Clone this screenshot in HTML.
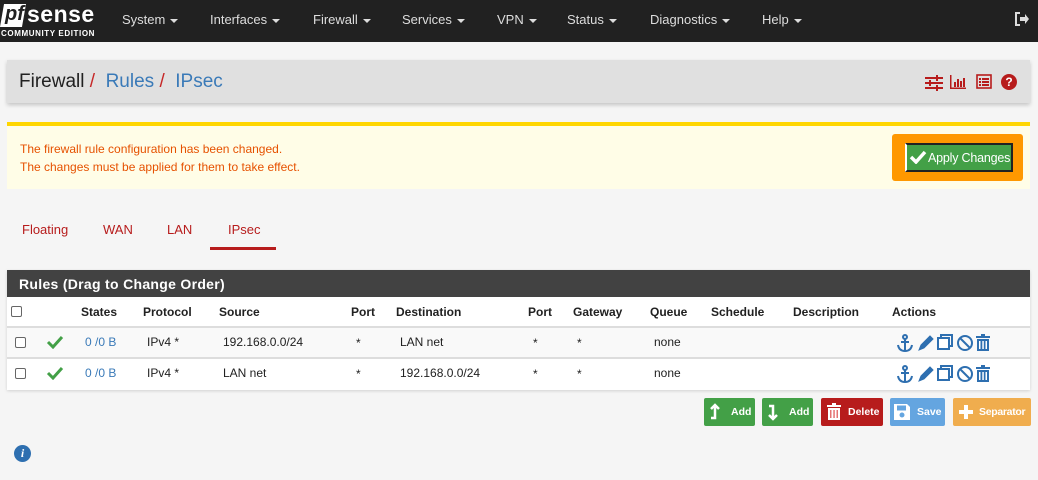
<!DOCTYPE html>
<html><head><meta charset="utf-8"><style>
*{box-sizing:border-box}
body{margin:0;width:1038px;height:480px;background:#f5f5f5;font-family:"Liberation Sans",sans-serif;font-size:12px;color:#212121;position:relative;overflow:hidden}
.nav{position:absolute;left:0;top:0;width:1038px;height:42px;background:#212121}
.nav .m{position:absolute;top:12px;color:#ddd;font-size:13px}
.car{display:inline-block;border-left:4px solid transparent;border-right:4px solid transparent;border-top:4px solid #ddd;vertical-align:middle;margin-left:5px}
.crumb{position:absolute;left:7px;top:60px;width:1023px;height:43px;background:#e0e0e0;box-shadow:0 2px 4px rgba(0,0,0,.2)}
.crumb .t{position:absolute;left:12px;top:11px;font-size:19px;white-space:nowrap}
.alert{position:absolute;left:7px;top:122px;width:1023px;height:67px;background:#fffde7;border-top:4px solid #ffd600;color:#e65100;font-size:12px}
.tab{position:absolute;top:222px;color:#b71c1c;font-size:13px}
.panel{position:absolute;left:7px;top:270px;width:1023px;height:120px;background:#fff;box-shadow:0 1px 3px rgba(0,0,0,.15)}
.ph{height:27px;background:#424242;color:#fff;font-weight:bold;font-size:14px;padding:6px 12px;letter-spacing:.3px}
.c{position:absolute;font-size:12px;white-space:nowrap}
.h{font-weight:bold}
.row{position:absolute;left:0;width:1023px;height:31px;border-top:2px solid #ddd}
.cb{position:absolute;width:11px;height:11px;border:1px solid #666;border-radius:2px;background:#fff}
.btn{position:absolute;top:398px;height:28px;color:#fff;font-size:10.5px;font-weight:bold;border-radius:2px;white-space:nowrap}
.btn span{position:absolute;top:8px}
</style></head><body>
<div class="nav">
 <div style="position:absolute;left:2px;top:4px;width:22px;height:23px;background:#fff;transform:skewX(-10deg)"></div>
 <div style="position:absolute;left:5px;top:3px;font:italic bold 20px 'Liberation Sans',sans-serif;color:#212121">pf</div>
 <div style="position:absolute;left:27px;top:1px;font:bold 23px 'Liberation Sans',sans-serif;color:#fff;letter-spacing:.5px">sense</div>
 <div style="position:absolute;left:1px;top:29px;font:bold 8px 'Liberation Sans',sans-serif;color:#fff;letter-spacing:.6px">COMMUNITY EDITION</div>
 <div class="m" style="left:122px">System<i class="car"></i></div>
 <div class="m" style="left:210px">Interfaces<i class="car"></i></div>
 <div class="m" style="left:313px">Firewall<i class="car"></i></div>
 <div class="m" style="left:402px">Services<i class="car"></i></div>
 <div class="m" style="left:497px">VPN<i class="car"></i></div>
 <div class="m" style="left:567px">Status<i class="car"></i></div>
 <div class="m" style="left:650px">Diagnostics<i class="car"></i></div>
 <div class="m" style="left:762px">Help<i class="car"></i></div>
 <svg style="position:absolute;left:1014px;top:11px" width="16" height="16" viewBox="0 0 16 16"><path d="M6 2H2v12h4" stroke="#ddd" stroke-width="2" fill="none"/><path d="M6 6h5V3l4 5-4 5v-3H6z" fill="#ddd"/></svg>
</div>
<div class="crumb"><div class="t">Firewall <span style="color:#c62828">/</span> &nbsp;<span style="color:#3a7ab8">Rules</span> <span style="color:#c62828">/</span> &nbsp;<span style="color:#3a7ab8">IPsec</span></div>
 <svg style="position:absolute;left:918px;top:15px" width="18" height="16" viewBox="0 0 18 16" fill="#b71c1c"><rect x="0" y="2" width="18" height="2"/><rect x="0" y="7" width="18" height="2"/><rect x="0" y="12" width="18" height="2"/><rect x="11" y="0" width="2" height="6"/><rect x="4" y="5" width="2" height="6"/><rect x="11" y="10" width="2" height="6"/></svg>
 <svg style="position:absolute;left:943px;top:15px" width="16" height="14" viewBox="0 0 16 14" fill="#b71c1c"><rect x="0" y="0" width="1.5" height="14"/><rect x="0" y="12.5" width="16" height="1.5"/><rect x="4" y="7" width="2" height="5"/><rect x="7" y="4" width="2" height="8"/><rect x="10" y="6" width="2" height="6"/><rect x="13" y="3" width="2" height="9"/></svg>
 <svg style="position:absolute;left:969px;top:14px" width="16" height="15" viewBox="0 0 16 15"><rect x="1" y="1" width="14" height="13" fill="none" stroke="#b71c1c" stroke-width="1.6"/><g fill="#b71c1c"><rect x="3" y="4" width="2" height="2"/><rect x="6" y="4" width="7" height="2"/><rect x="3" y="7" width="2" height="2"/><rect x="6" y="7" width="7" height="2"/><rect x="3" y="10" width="2" height="2"/><rect x="6" y="10" width="7" height="2"/></g></svg>
 <div style="position:absolute;left:994px;top:14px;width:16px;height:16px;border-radius:50%;background:#b71c1c;color:#fff;font-weight:bold;font-size:12px;text-align:center;line-height:16px">?</div>
</div>
<div class="alert">
 <div style="position:absolute;left:13px;top:16px">The firewall rule configuration has been changed.</div>
 <div style="position:absolute;left:13px;top:34px">The changes must be applied for them to take effect.</div>
 <div style="position:absolute;left:885px;top:8px;width:131px;height:47px;background:#ff9800;border-radius:3px">
  <div style="position:absolute;left:13px;top:9px;width:108px;height:29px;background:#43a047;border:2px solid #222;border-left-color:#fff;color:#fff;font-size:12.5px;padding:6px 0 0 21px;white-space:nowrap;letter-spacing:-.2px">Apply Changes</div>
  <svg style="position:absolute;left:17px;top:16px" width="18" height="14" viewBox="0 0 18 14"><path d="M2 7l5 5 9-10" stroke="#fff" stroke-width="3.5" fill="none"/></svg>
 </div>
</div>
<div class="tab" style="left:22px">Floating</div>
<div class="tab" style="left:103px">WAN</div>
<div class="tab" style="left:167px">LAN</div>
<div class="tab" style="left:228px">IPsec</div>
<div style="position:absolute;left:210px;top:247px;width:66px;height:3px;background:#b71c1c"></div>
<div class="panel">
 <div class="ph">Rules (Drag to Change Order)</div>
 <div class="cb" style="left:4px;top:36px"></div>
 <div class="c h" style="left:74px;top:35px">States</div>
 <div class="c h" style="left:136px;top:35px">Protocol</div>
 <div class="c h" style="left:212px;top:35px">Source</div>
 <div class="c h" style="left:344px;top:35px">Port</div>
 <div class="c h" style="left:389px;top:35px">Destination</div>
 <div class="c h" style="left:521px;top:35px">Port</div>
 <div class="c h" style="left:566px;top:35px">Gateway</div>
 <div class="c h" style="left:643px;top:35px">Queue</div>
 <div class="c h" style="left:704px;top:35px">Schedule</div>
 <div class="c h" style="left:786px;top:35px">Description</div>
 <div class="c h" style="left:885px;top:35px">Actions</div>
 <div class="row" style="top:56px;background:#f9f9f9">
  <div class="cb" style="left:8px;top:9px"></div>
  <svg style="position:absolute;left:39px;top:7px" width="18" height="14"><path d="M2 7l5 5 9-10" stroke="#43a047" stroke-width="3" fill="none"/></svg>
  <div class="c" style="left:78px;top:7px;color:#3a7ab8">0 /0 B</div>
  <div class="c" style="left:140px;top:7px">IPv4 *</div>
  <div class="c" style="left:216px;top:7px">192.168.0.0/24</div>
  <div class="c" style="left:349px;top:8px">*</div>
  <div class="c" style="left:393px;top:7px">LAN net</div>
  <div class="c" style="left:526px;top:8px">*</div>
  <div class="c" style="left:570px;top:8px">*</div>
  <div class="c" style="left:647px;top:7px">none</div>
  <svg style="position:absolute;left:889px;top:5px" width="100" height="20" viewBox="0 0 100 20"><g stroke="#2e6fb0" fill="none" stroke-width="2"><circle cx="9" cy="4" r="2"/><path d="M9 6v12M5 9h8M2 12q1 6 7 6q6 0 7-6"/><path d="M23 17l2-5 9-9 3 3-9 9z" fill="#2e6fb0" stroke-width="1"/><rect x="45" y="2" width="11" height="11"/><rect x="42" y="5" width="11" height="11" fill="#fff"/><circle cx="69" cy="10" r="7"/><path d="M64 5l10 10"/></g><g fill="#2e6fb0"><rect x="80" y="3" width="14" height="2"/><rect x="85" y="1" width="4" height="2"/><path d="M81 6h12v12H81z"/></g><g fill="#fff"><rect x="83" y="8" width="1.5" height="8"/><rect x="86.3" y="8" width="1.5" height="8"/><rect x="89.5" y="8" width="1.5" height="8"/></g></svg>
 </div>
 <div class="row" style="top:87px">
  <div class="cb" style="left:8px;top:9px"></div>
  <svg style="position:absolute;left:39px;top:7px" width="18" height="14"><path d="M2 7l5 5 9-10" stroke="#43a047" stroke-width="3" fill="none"/></svg>
  <div class="c" style="left:78px;top:7px;color:#3a7ab8">0 /0 B</div>
  <div class="c" style="left:140px;top:7px">IPv4 *</div>
  <div class="c" style="left:216px;top:7px">LAN net</div>
  <div class="c" style="left:349px;top:8px">*</div>
  <div class="c" style="left:393px;top:7px">192.168.0.0/24</div>
  <div class="c" style="left:526px;top:8px">*</div>
  <div class="c" style="left:570px;top:8px">*</div>
  <div class="c" style="left:647px;top:7px">none</div>
  <svg style="position:absolute;left:889px;top:5px" width="100" height="20" viewBox="0 0 100 20"><g stroke="#2e6fb0" fill="none" stroke-width="2"><circle cx="9" cy="4" r="2"/><path d="M9 6v12M5 9h8M2 12q1 6 7 6q6 0 7-6"/><path d="M23 17l2-5 9-9 3 3-9 9z" fill="#2e6fb0" stroke-width="1"/><rect x="45" y="2" width="11" height="11"/><rect x="42" y="5" width="11" height="11" fill="#fff"/><circle cx="69" cy="10" r="7"/><path d="M64 5l10 10"/></g><g fill="#2e6fb0"><rect x="80" y="3" width="14" height="2"/><rect x="85" y="1" width="4" height="2"/><path d="M81 6h12v12H81z"/></g><g fill="#fff"><rect x="83" y="8" width="1.5" height="8"/><rect x="86.3" y="8" width="1.5" height="8"/><rect x="89.5" y="8" width="1.5" height="8"/></g></svg>
 </div>
</div>
<div class="btn" style="left:704px;width:51px;background:#43a047"><svg style="position:absolute;left:5px;top:5px" width="12" height="18"><path d="M6 2v13H2M2 6l4-4 4 4" stroke="#fff" stroke-width="2.5" fill="none"/></svg><span style="left:27px">Add</span></div>
<div class="btn" style="left:762px;width:51px;background:#43a047"><svg style="position:absolute;left:5px;top:5px" width="12" height="18"><path d="M6 16V3H2M2 12l4 4 4-4" stroke="#fff" stroke-width="2.5" fill="none"/></svg><span style="left:27px">Add</span></div>
<div class="btn" style="left:821px;width:62px;background:#b71c1c"><svg style="position:absolute;left:5px;top:5px" width="16" height="18"><rect x="1" y="2" width="14" height="2" fill="#fff"/><rect x="6" y="0" width="4" height="2" fill="#fff"/><path d="M2 5h12v12H2z" fill="#fff"/><g fill="#e57373"><rect x="4" y="7" width="1.5" height="8"/><rect x="7.3" y="7" width="1.5" height="8"/><rect x="10.5" y="7" width="1.5" height="8"/></g></svg><span style="left:27px">Delete</span></div>
<div class="btn" style="left:890px;width:55px;background:#64a5e0"><svg style="position:absolute;left:4px;top:6px" width="16" height="16"><path d="M0 0h13l3 3v13H0z" fill="#fff"/><rect x="3" y="1.5" width="9" height="5" fill="#64a5e0"/><circle cx="8" cy="11" r="2.5" fill="#64a5e0"/></svg><span style="left:27px">Save</span></div>
<div class="btn" style="left:953px;width:78px;background:#f0ad4e"><svg style="position:absolute;left:5px;top:6px" width="16" height="16"><path d="M8 1v14M1 8h14" stroke="#fff" stroke-width="4"/></svg><span style="left:26px;letter-spacing:-.3px">Separator</span></div>
<div style="position:absolute;left:14px;top:445px;width:17px;height:17px;border-radius:50%;background:#2e6fb0;color:#fff;font:bold italic 12px 'Liberation Serif',serif;text-align:center;line-height:17px">i</div>
</body></html>
